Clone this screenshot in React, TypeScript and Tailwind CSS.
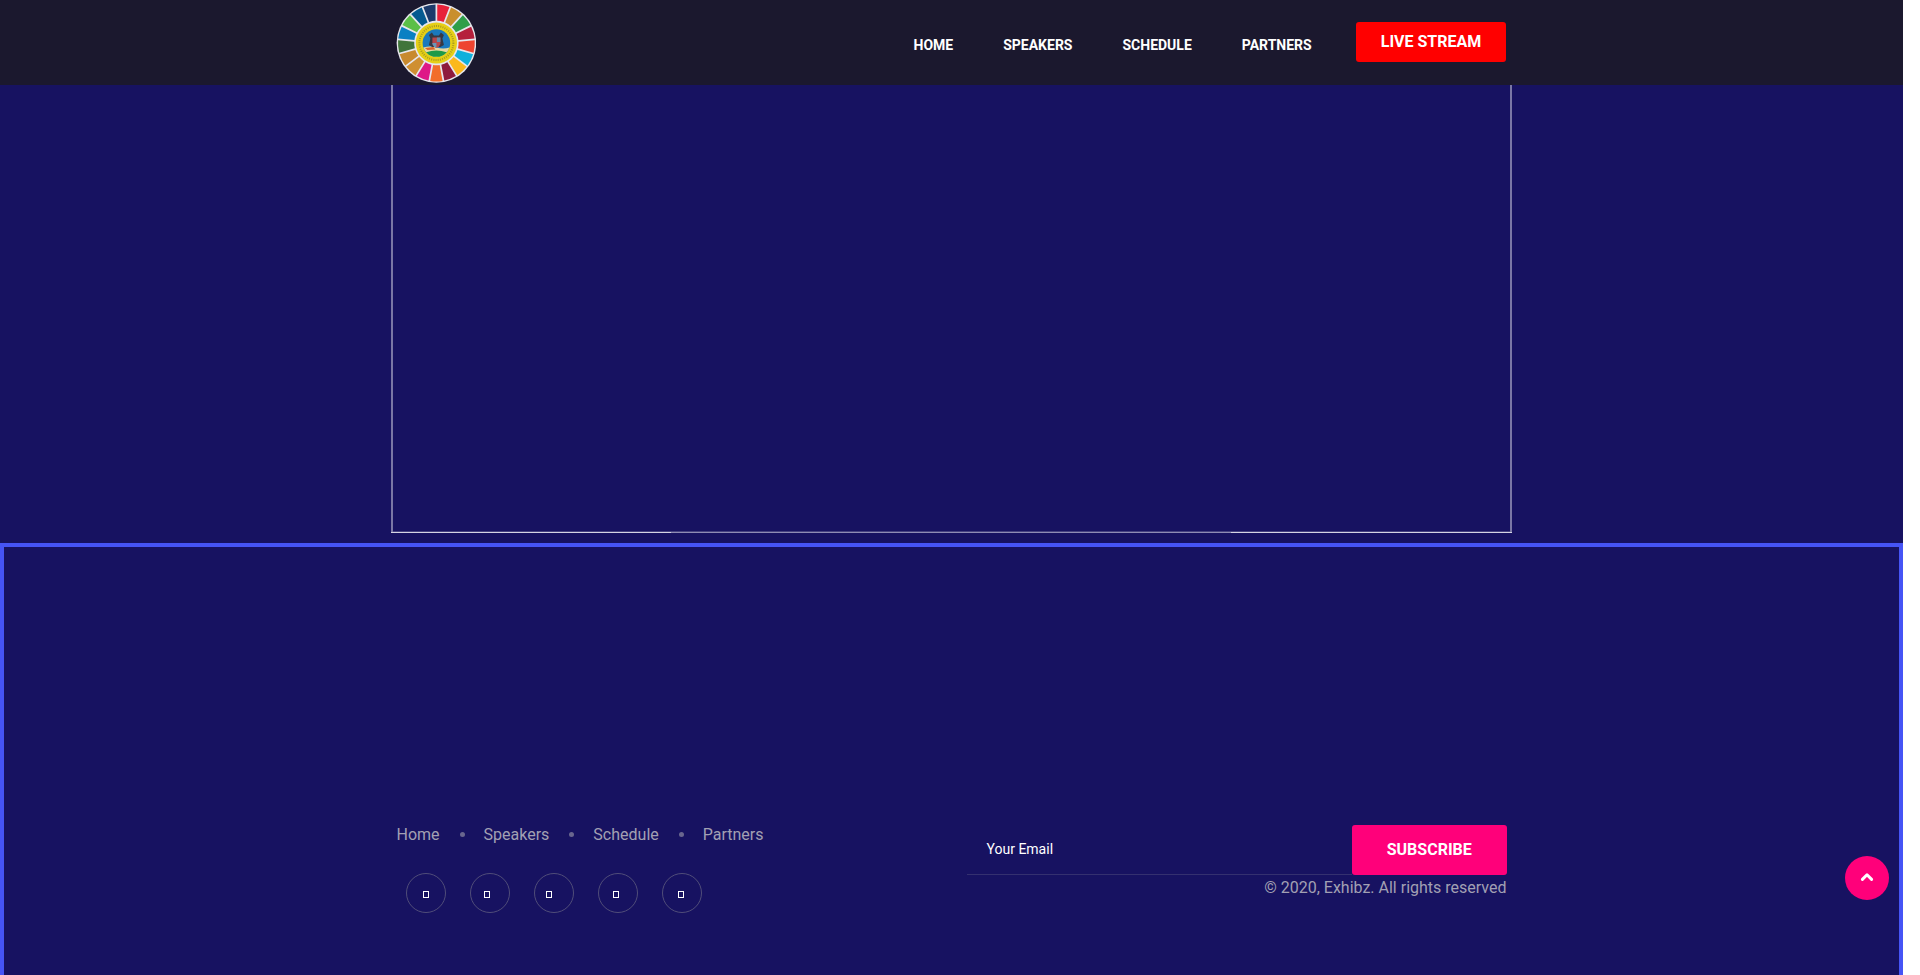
import React from "react";

const SEGMENTS = [
  "#e8213a", "#c98f2d", "#2f9e49", "#b51f3c", "#ee4430", "#0fb0dc", "#fbb81c", "#8e1a3d", "#f26d2a",
  "#de1887", "#cf8f31", "#c88a2e", "#40753b", "#0a80c3", "#5bbf47", "#055a90", "#1b3a6b",
];

function point(r: number, a: number) {
  const rad = ((a - 90) * Math.PI) / 180;
  return `${(r * Math.cos(rad)).toFixed(2)} ${(r * Math.sin(rad)).toFixed(2)}`;
}

function Logo() {
  const step = 360 / 17;
  return (
    <svg viewBox="-40.4 -40 80 80" className="h-20 w-20">
      <circle r="39.8" fill="#e6e6ec" />
      {SEGMENTS.map((c, i) => {
        const a = i * step;
        const b = a + step;
        return (
          <path
            key={i}
            d={`M${point(38.4, a + 1.3)} A38.4 38.4 0 0 1 ${point(38.4, b - 1.3)} L${point(22.2, b - 2.2)} A22.2 22.2 0 0 0 ${point(22.2, a + 2.2)} Z`}
            fill={c}
          />
        );
      })}
      <circle r="20.6" fill="#e6cf16" />
      <circle r="17" fill="none" stroke="#a89a22" strokeWidth="2" strokeDasharray="1 1.2" />
      <circle r="13.8" fill="#1a79bd" />
      <path d="M-13.1 4.5 Q-6 2.5 0 4.5 Q7 6.5 13.1 4.5 A13.8 13.8 0 0 1 -13.1 4.5Z" fill="#e8d9a0" />
      <path d="M-10.2 9.3 Q0 5.5 10.2 9.3 A13.8 13.8 0 0 1 -10.2 9.3Z" fill="#1f9a48" />
      <path d="M-11.5 5 L-3 4 L-1 6.5 L-9 7Z" fill="#d8642a" />
      <path d="M-7.5 -8 L-4.5 -10.5 L-2.5 -7.5 H2.5 L4.5 -10.5 L7.5 -8 L6 -4.5 L7.5 2 L4 4 H-4 L-7.5 2 L-6 -4.5Z" fill="#353944" />
      <path d="M-4 -5.5 H4 V1 Q3 4 0 5 Q-3 4 -4 1Z" fill="#b7474b" />
      <path d="M0.5 -5.5 H4 V-1 H0.5Z" fill="#5d8cae" />
      <path d="M-4 0 H0 V5 Q-3 4 -4 1Z" fill="#6897b7" />
    </svg>
  );
}

const LINKS = ["Home", "Speakers", "Schedule", "Partners"];
const GLYPH_PADDING = ["pl-4", "pl-[13px]", "pl-[11px]", "pl-[14px]", "pl-[15px]"];

export default function App() {
  return (
    <div className="h-[975px] w-full overflow-hidden bg-white font-['Roboto',sans-serif]">
      <div className="relative flex h-full w-[1903px] flex-col bg-[#171261]">
        <header className="h-[85px] shrink-0 bg-[#1b182e]">
          <div className="ml-[396px] flex h-full w-[1110px] items-start">
            <div className="pt-[3px]">
              <Logo />
            </div>
            <nav className="mr-[44.3px] ml-auto flex gap-[50px] pt-[35px] text-[14px] leading-5 font-bold text-white uppercase">
              {LINKS.map((l) => (
                <a key={l}>{l}</a>
              ))}
            </nav>
            <a className="mt-[22px] flex h-10 w-[150px] items-center justify-center rounded-[3px] bg-[#ff0000] text-[16px] font-bold text-white">
              LIVE STREAM
            </a>
          </div>
        </header>

        <section className="h-[458px] shrink-0 pl-[391px]">
          <div className="flex h-[448px] w-[1121px] flex-col border-x-2 border-[#7a77a5]">
            <div className="mt-auto h-px bg-[#454180]" />
            <div className="-mx-0.5 flex h-px">
              <div className="w-[280px] bg-[#d5d4e3]" />
              <div className="flex-1 bg-[#8f8cb4]" />
              <div className="w-[281px] bg-[#d5d4e3]" />
            </div>
          </div>
        </section>

        <footer className="flex-1 border-x-4 border-t-4 border-[#4654f5] pt-[278px]">
          <div className="ml-[392.5px] flex w-[1110px] justify-between">
            <div>
              <ul className="flex pt-px text-[16px] leading-[18px] text-[#a2a0b3]">
                {LINKS.map((l, i) => (
                  <li key={l} className="flex items-center">
                    {i > 0 && <span className="mr-[19px] mb-px ml-5 h-[5px] w-[5px] rounded-full bg-[#69668e]" />}
                    {l}
                  </li>
                ))}
              </ul>
              <ul className="mt-[29px] ml-[9.8px] flex gap-6">
                {GLYPH_PADDING.map((p) => (
                  <li key={p} className={`h-10 w-10 rounded-full border border-[#504d79] pt-[17px] ${p}`}>
                    <span className="block h-[7px] w-1.5 border border-white" />
                  </li>
                ))}
              </ul>
            </div>
            <div className="flex w-[540px] flex-col">
              <div className="flex h-[50px]">
                <div className="flex flex-1 items-center border-b border-[#34306f] pl-5 text-[14px] text-white">Your Email</div>
                <button className="w-[154.5px] rounded-[3px] bg-[#ff007a] text-[16px] font-bold text-white">SUBSCRIBE</button>
              </div>
              <p className="text-right text-[16px] leading-[26px] text-[#a2a0b3]">© 2020, Exhibz. All rights reserved</p>
            </div>
          </div>
        </footer>

        <button className="absolute top-[856px] left-[1845px] flex h-11 w-11 items-center justify-center rounded-full bg-[#ff007a]">
          <svg viewBox="0 0 14 10" className="mb-0.5 h-[10px] w-[14px]" fill="none" stroke="#fff" strokeWidth="3" strokeLinecap="round" strokeLinejoin="round">
            <path d="M2.4 7.4 L7 2.8 L11.6 7.4" />
          </svg>
        </button>
      </div>
    </div>
  );
}
